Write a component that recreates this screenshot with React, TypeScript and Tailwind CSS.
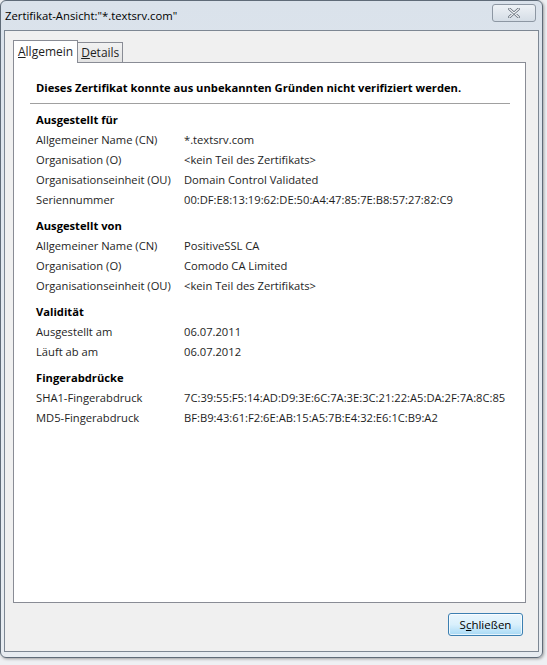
import React from "react";

type Row = [string, string];

const sections: { title: string; rows: Row[] }[] = [
  {
    title: "Ausgestellt für",
    rows: [
      ["Allgemeiner Name (CN)", "*.textsrv.com"],
      ["Organisation (O)", "<kein Teil des Zertifikats>"],
      ["Organisationseinheit (OU)", "Domain Control Validated"],
      ["Seriennummer", "00:DF:E8:13:19:62:DE:50:A4:47:85:7E:B8:57:27:82:C9"],
    ],
  },
  {
    title: "Ausgestellt von",
    rows: [
      ["Allgemeiner Name (CN)", "PositiveSSL CA"],
      ["Organisation (O)", "Comodo CA Limited"],
      ["Organisationseinheit (OU)", "<kein Teil des Zertifikats>"],
    ],
  },
  {
    title: "Validität",
    rows: [
      ["Ausgestellt am", "06.07.2011"],
      ["Läuft ab am", "06.07.2012"],
    ],
  },
  {
    title: "Fingerabdrücke",
    rows: [
      ["SHA1-Fingerabdruck", "7C:39:55:F5:14:AD:D9:3E:6C:7A:3E:3C:21:22:A5:DA:2F:7A:8C:85"],
      ["MD5-Fingerabdruck", "BF:B9:43:61:F2:6E:AB:15:A5:7B:E4:32:E6:1C:B9:A2"],
    ],
  },
];

export default function App() {
  return (
    <div
      className="w-[547px] h-[665px] bg-[#eef0f3] overflow-hidden text-[11.2px] text-[#1e1e1e]"
      style={{ fontFamily: '"Open Sans", "Noto Sans", sans-serif' }}
    >
      <div className="relative w-[543px] h-[658px] rounded-[6px] border border-[#5f6b78] bg-gradient-to-b from-[#dae2eb] via-[#e3e9f0] to-[#e7ecf1] shadow-[1px_1px_3px_rgba(0,0,0,0.35)] flex flex-col">
        {/* title bar */}
        <div className="h-[29px] flex items-start shrink-0">
          <div className="pl-[4px] pt-[7px] text-[11.3px] text-black leading-[16px]">
            Zertifikat-Ansicht:"*.textsrv.com"
          </div>
          <div className="ml-auto mr-[6px] mt-[3px] w-[44px] h-[18px] rounded-[3px] border border-[#8d97a3] bg-gradient-to-b from-[#eef2f6] to-[#d5dde6] flex items-center justify-center">
            <svg width="12" height="10" viewBox="0 0 12 10">
              <path d="M1.5 1 L10.5 9 M10.5 1 L1.5 9" stroke="#5a6470" strokeWidth="2.6" strokeLinecap="round" />
              <path d="M1.5 1 L10.5 9 M10.5 1 L1.5 9" stroke="#f4f6f8" strokeWidth="1.2" strokeLinecap="round" />
            </svg>
          </div>
        </div>
        {/* client area */}
        <div className="ml-[3px] mr-[3px] h-[622px] border border-[#7d8793] bg-[#f0f0f0] flex flex-col px-[8px]">
          {/* tabs */}
          <div className="flex items-end h-[31px] pt-[9px]">
            <div className="h-[23px] px-[4px] border border-b-0 border-[#898c95] bg-white flex items-center -mb-px relative z-10 text-[12px]">
              <span><span className="underline">A</span>llgemein</span>
            </div>
            <div className="h-[20px] px-[3px] border border-l-0 border-b-0 border-[#898c95] bg-gradient-to-b from-[#f2f2f2] to-[#e3e3e3] flex items-center text-[12px]">
              <span><span className="underline">D</span>etails</span>
            </div>
          </div>
          {/* panel */}
          <div className="w-[513px] h-[541px] border border-[#898c95] bg-white flex flex-col px-[16px]">
            <div className="pt-[16px] pl-[6px] font-bold leading-[18px] text-black">
              Dieses Zertifikat konnte aus unbekannten Gründen nicht verifiziert werden.
            </div>
            <div className="mt-[6px] h-px bg-[#a0a0a0] w-[480px]" />
            <div className="pl-[6px] pt-[6px] flex flex-col">
              {sections.map((s) => (
                <div key={s.title} className="flex flex-col mb-[6px]">
                  <div className="font-bold h-[20px] leading-[20px] text-black">{s.title}</div>
                  {s.rows.map(([k, v]) => (
                    <div key={k} className="flex h-[20px] leading-[20px]">
                      <div className="w-[148px] shrink-0">{k}</div>
                      <div className="whitespace-nowrap">{v}</div>
                    </div>
                  ))}
                </div>
              ))}
            </div>
          </div>
          {/* footer */}
          <div className="flex justify-end pr-[7px] pt-[10px]">
            <button className="w-[75px] h-[23px] rounded-[3px] border border-[#3c7fb1] bg-gradient-to-b from-[#eaf6fd] via-[#d9f0fc] to-[#a7d9f5] shadow-[inset_0_0_0_1px_rgba(255,255,255,0.7)] text-[11.5px] text-black">
              S<span className="underline">c</span>hließen
            </button>
          </div>
        </div>
      </div>
    </div>
  );
}
